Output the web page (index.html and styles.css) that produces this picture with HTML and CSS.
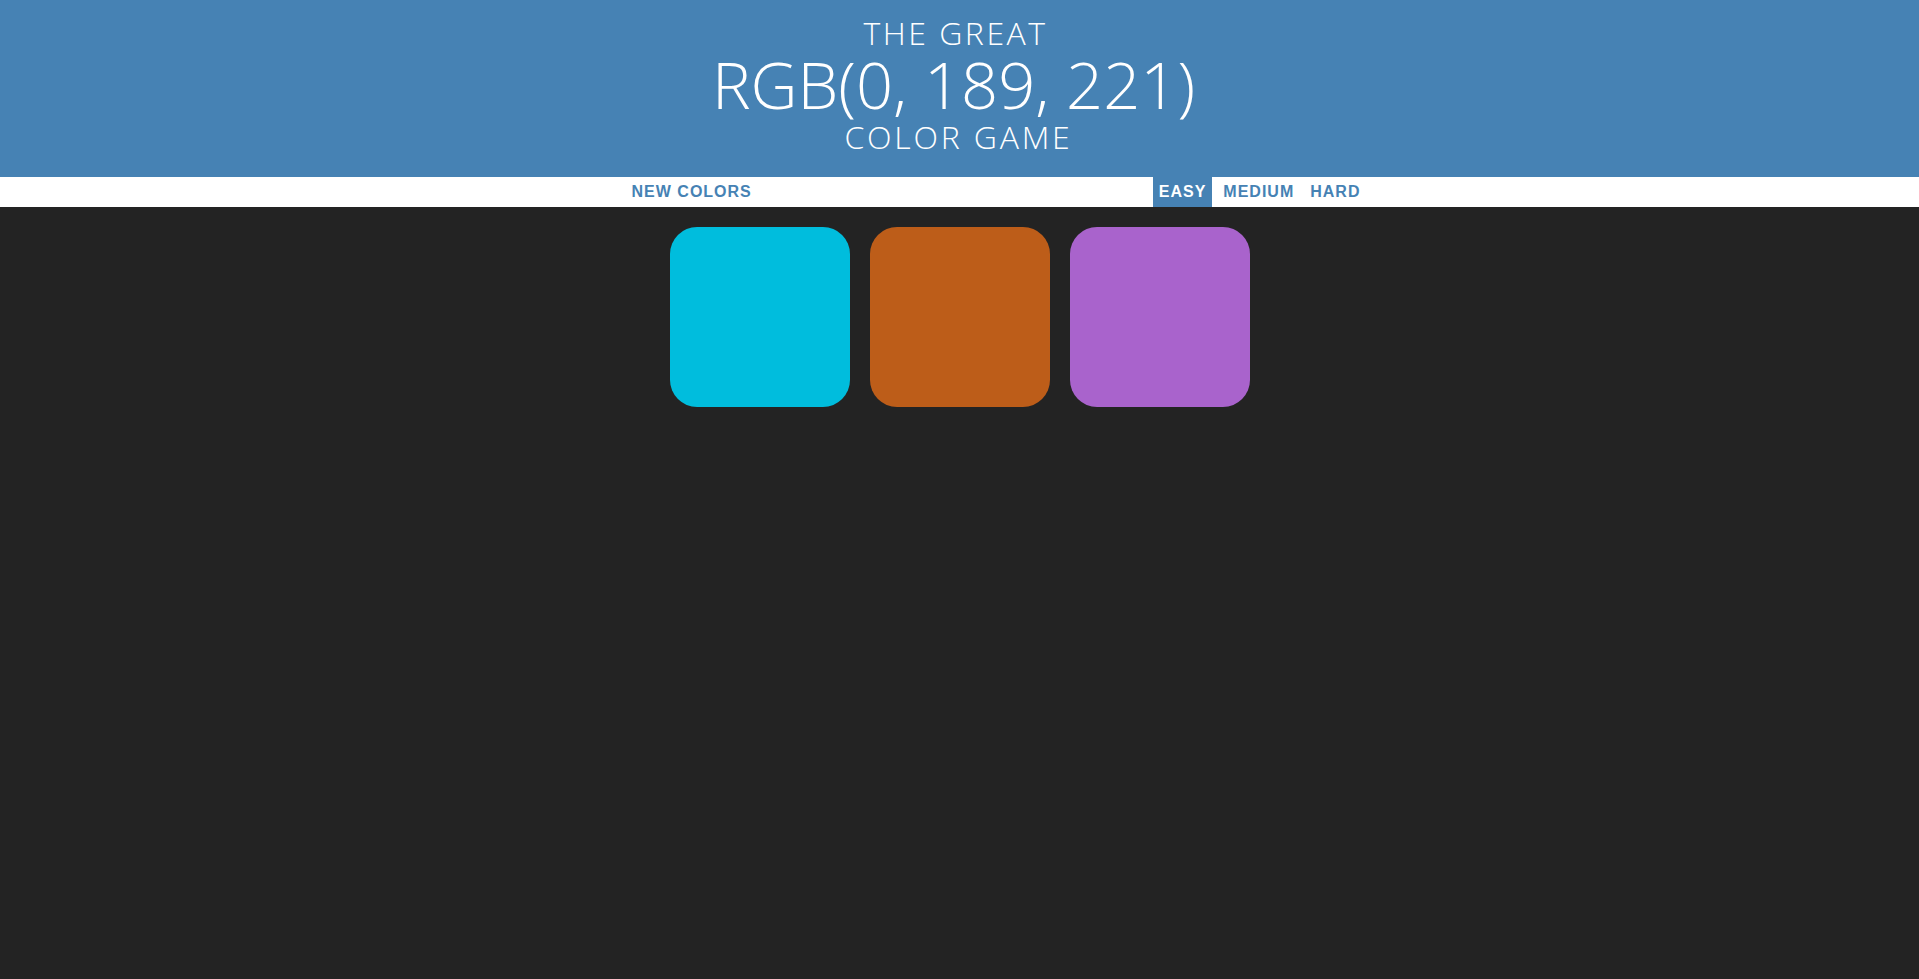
FILE: index.html
```html
<!DOCTYPE html>
<html lang="en">
<head>
<meta charset="utf-8">
<title>Color Game</title>
<link rel="stylesheet" href="styles.css">
</head>
<body>
<h1 class="title">
  <span class="title-small title-top">The Great</span>
  <span class="title-rgb">RGB(0, 189, 221)</span>
  <span class="title-small title-bottom">Color Game</span>
</h1>
<div class="stripe">
  <button class="btn btn-reset">New Colors</button>
  <span class="message"></span>
  <button class="btn btn-mode selected">Easy</button>
  <button class="btn btn-mode btn-medium">Medium</button>
  <button class="btn btn-mode btn-hard">Hard</button>
</div>
<div class="board">
  <div class="square sq-cyan"></div>
  <div class="square sq-orange"></div>
  <div class="square sq-purple"></div>
</div>
</body>
</html>
```
FILE: styles.css
```css
html, body {
  margin: 0;
  padding: 0;
}
body {
  background: #232323;
  min-height: 979px;
  font-family: "Open Sans", "Liberation Sans", sans-serif;
}
.title {
  margin: 0;
  height: 177px;
  box-sizing: border-box;
  padding-top: 17px;
  background: #4682b4;
  color: #ffffff;
  font-weight: 350;
  text-align: center;
  text-transform: uppercase;
  display: flex;
  flex-direction: column;
  align-items: center;
}
.title-small {
  display: block;
  font-size: 32px;
  line-height: 32px;
}
.title-top {
  letter-spacing: 2.5px;
  padding-right: 8px;
}
.title-rgb {
  display: block;
  font-size: 65px;
  line-height: 65px;
  margin-top: 3px;
  padding-right: 12px;
}
.title-bottom {
  margin-top: 4px;
  letter-spacing: 2.8px;
  padding-right: 2px;
}
.stripe {
  height: 30px;
  background: #ffffff;
  display: flex;
  align-items: stretch;
  justify-content: center;
  padding-left: 73px;
}
.btn {
  border: none;
  background: none;
  margin: 0;
  padding: 0 6px;
  height: 30px;
  font-family: "Liberation Sans", Arial, sans-serif;
  font-size: 16px;
  font-weight: 700;
  letter-spacing: 1px;
  text-transform: uppercase;
  color: #4682b4;
  outline: none;
}
.message {
  width: 395px;
}
.btn-medium {
  margin-left: 5px;
}
.btn-hard {
  margin-left: 4px;
}
.selected {
  background: #4682b4;
  color: #ffffff;
}
.board {
  width: 600px;
  margin: 10px auto 0;
  display: flex;
  flex-wrap: wrap;
}
.square {
  width: 180px;
  height: 180px;
  margin: 10px;
  border-radius: 15%;
}
.sq-cyan { background: #00bddd; }
.sq-orange { background: #bd5d19; }
.sq-purple { background: #a963cc; }
```
